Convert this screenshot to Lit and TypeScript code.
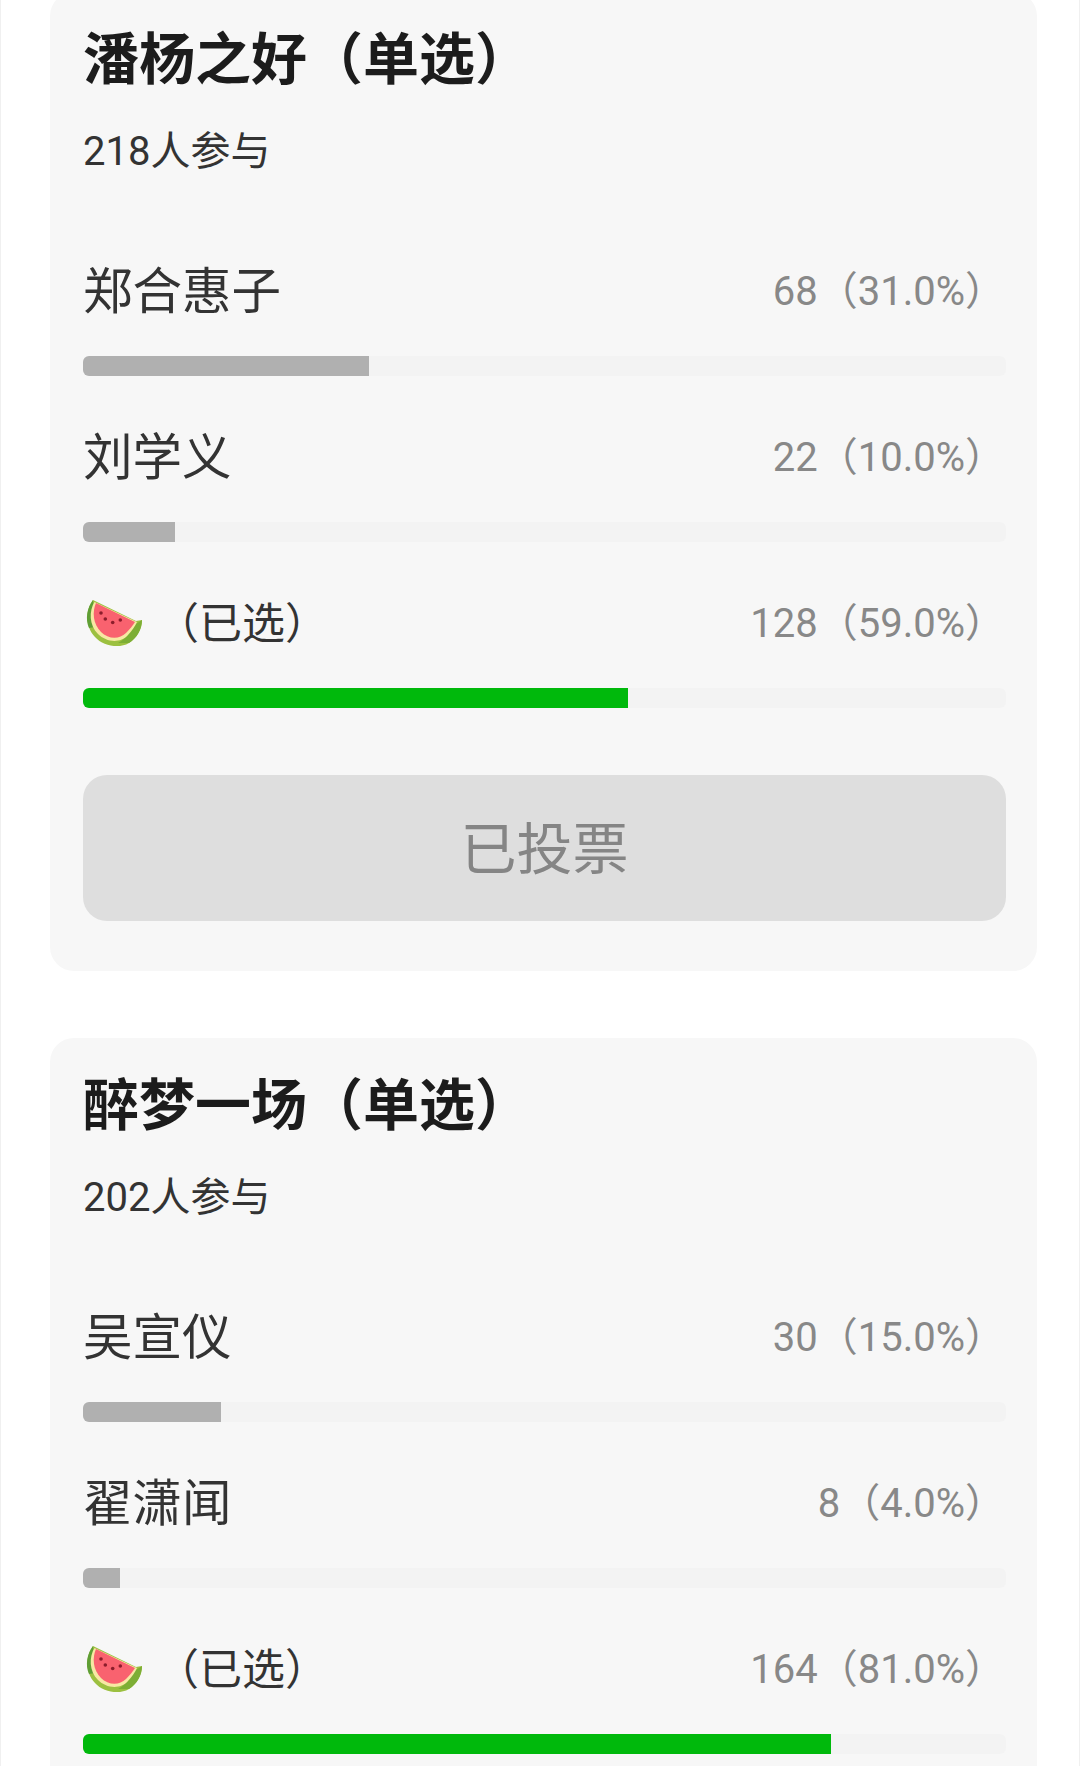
import { LitElement, html, css, svg } from "lit";
import { customElement } from "lit/decorators.js";

type Option = { name: string; count: number; percent: number; picked?: boolean };
type Poll = { title: string; people: number; options: Option[]; voted?: boolean };

const polls: Poll[] = [
  {
    title: "潘杨之好（单选）",
    people: 218,
    voted: true,
    options: [
      { name: "郑合惠子", count: 68, percent: 31 },
      { name: "刘学义", count: 22, percent: 10 },
      { name: "", count: 128, percent: 59, picked: true },
    ],
  },
  {
    // its button is below the fold in the reference
    title: "醉梦一场（单选）",
    people: 202,
    options: [
      { name: "吴宣仪", count: 30, percent: 15 },
      { name: "翟潇闻", count: 8, percent: 4 },
      { name: "", count: 164, percent: 81, picked: true },
    ],
  },
];

// watermelon slice, same shape as the emoji in the reference
const melon = svg`
  <path d="M10 3C3 12 1 28 12 40C20 49 36 52 46 46C54 41 59 32 59 23L53 24Z" fill="#9cc040"/>
  <path d="M10 3C4 11 2 22 6 31L12 30Z" fill="#5f9e35"/>
  <path d="M46 46C54 41 59 32 59 23L50 29C47 36 42 42 35 46Z" fill="#7dae35"/>
  <path d="M11.5 5C6 14 6 28 15 37C23 45 37 47 45 38C49 34 52 29 54 25Z" fill="#f7e8a3"/>
  <path d="M13 6C9 15 10 27 18 35C25 42 36 43 43 36C47 32 50 28 52 25Z" fill="#f9626f"/>
  <circle cx="18" cy="16" r="1.8" fill="#8c1d2b"/>
  <circle cx="22.3" cy="22" r="1.8" fill="#8c1d2b"/>
  <circle cx="29.7" cy="25.5" r="1.8" fill="#8c1d2b"/>
  <circle cx="37.3" cy="23" r="1.8" fill="#8c1d2b"/>
`;

@customElement("app-root")
export class AppRoot extends LitElement {
  static styles = css`
    :host {
      display: block;
      box-sizing: border-box;
      height: 1766px;
      overflow: hidden;
      background: #fff;
      border-left: 1px solid #f0f0f0;
      border-right: 1px solid #f0f0f0;
      font-family: Roboto, "Noto Sans CJK SC", sans-serif;
    }
    .page {
      display: flex;
      flex-direction: column;
      gap: 67px;
      margin-top: -8px;
      padding: 0 42px 0 49px;
    }
    .card {
      background: #f7f7f7;
      border-radius: 24px;
      padding: 30px 31px 50px 33px;
    }
    .title {
      font-size: 56px;
      font-weight: 700;
      line-height: 76px;
      color: #1c1c1c;
      white-space: nowrap;
    }
    .people {
      margin-top: 29px;
      font-size: 40px;
      line-height: 50px;
      color: #333;
    }
    .options {
      display: flex;
      flex-direction: column;
      gap: 50px;
      margin-top: 83px;
    }
    .row {
      display: flex;
      align-items: center;
      justify-content: space-between;
      box-sizing: border-box;
      height: 60px;
      margin-bottom: 36px;
      padding-bottom: 6px;
    }
    .name {
      display: flex;
      align-items: center;
      font-size: 49.5px;
      color: #333;
    }
    .name.with-melon {
      padding-top: 5px;
      font-size: 43px;
    }
    .with-melon span {
      margin-bottom: 4px;
    }
    .melon {
      width: 62px;
      height: 50px;
      margin-right: 11px;
    }
    .result {
      padding: 2px 1px 0 0;
      font-size: 40px;
      color: #888;
    }
    .track {
      height: 20px;
      border-radius: 6px;
      background: #f3f3f3;
      overflow: hidden;
    }
    .fill {
      height: 100%;
      background: #b0b0b0;
    }
    .fill.green {
      background: #00b90c;
    }
    .voted {
      display: flex;
      align-items: center;
      justify-content: center;
      box-sizing: border-box;
      height: 146px;
      margin-top: 67px;
      padding-bottom: 8px;
      border-radius: 24px;
      background: #dedede;
      color: #858585;
      font-size: 56px;
    }
  `;

  renderOption(o: Option) {
    return html`
      <div class="option">
        <div class="row">
          <div class="name ${o.picked ? "with-melon" : ""}">
            ${o.picked
              ? html`<svg class="melon" viewBox="0 0 62 50">${melon}</svg><span>（已选）</span>`
              : o.name}
          </div>
          <div class="result">${o.count}（${o.percent.toFixed(1)}%）</div>
        </div>
        <div class="track">
          <div class="fill ${o.picked ? "green" : ""}" style="width: ${o.percent}%"></div>
        </div>
      </div>
    `;
  }

  render() {
    return html`
      <div class="page">
        ${polls.map(
          (p) => html`
            <section class="card">
              <div class="title">${p.title}</div>
              <div class="people">${p.people}人参与</div>
              <div class="options">${p.options.map((o) => this.renderOption(o))}</div>
              ${p.voted ? html`<div class="voted">已投票</div>` : ""}
            </section>
          `
        )}
      </div>
    `;
  }
}
